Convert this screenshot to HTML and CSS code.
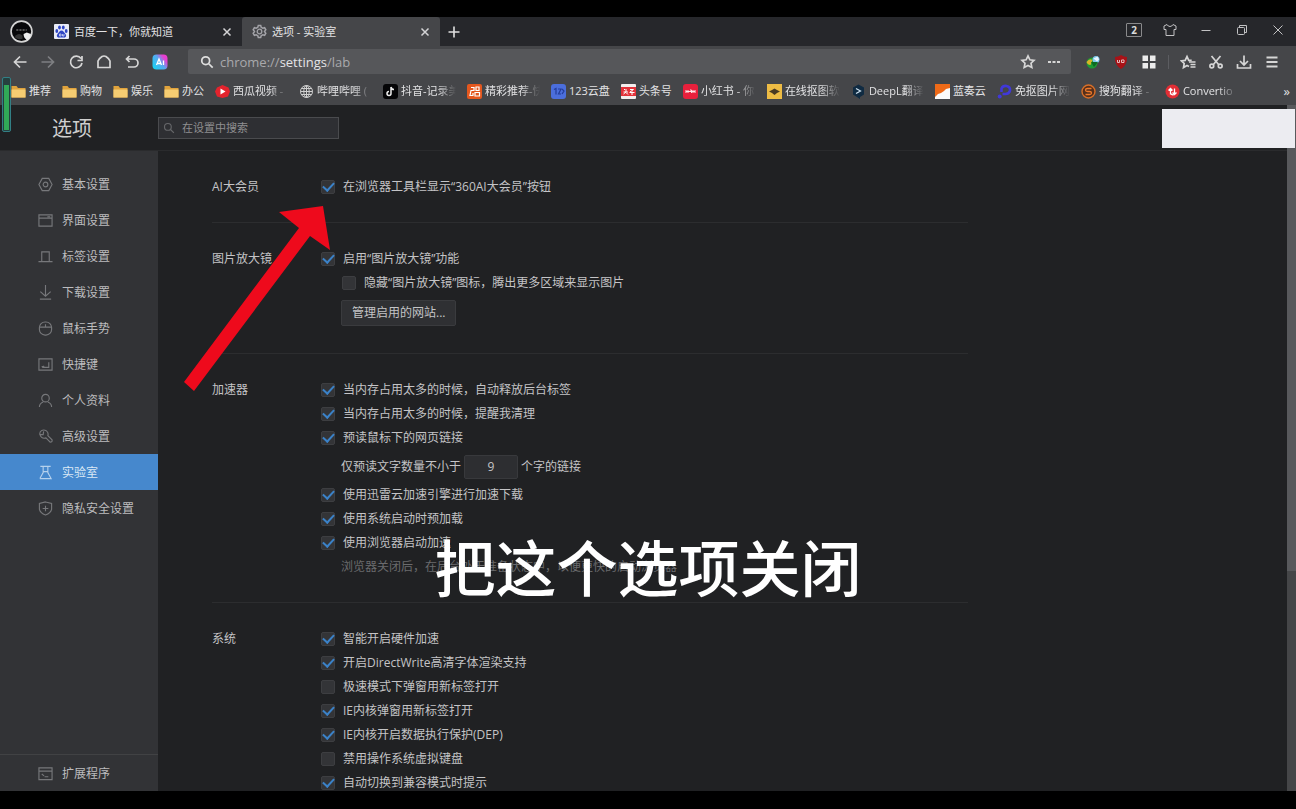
FILE: index.html
```html
<!DOCTYPE html>
<html lang="zh-CN">
<head>
<meta charset="utf-8">
<title>选项 - 实验室</title>
<link rel="stylesheet" href="styles.css">
</head>
<body>
<svg class="defs" aria-hidden="true">
  <symbol id="folder" viewBox="0 0 15 15"><path d="M.5 2h5l1.500 2h7.500v9.500h-14z" fill="#e0a33c"/><path d="M.5 5.500h14v8h-14z" fill="#f6cd72"/></symbol>
  <symbol id="close" viewBox="0 0 12 12"><path d="M2.500 2.500l7 7M9.500 2.500l-7 7" stroke="currentColor" stroke-width="1.500" fill="none"/></symbol>
</svg>
<div class="browser">
  <div class="tabstrip">
    <button class="avatar" aria-label="账号"><svg viewBox="0 0 22 22"><circle cx="11" cy="11" r="10" fill="#08080a" stroke="#d4d4d4" stroke-width="1.600"/><path d="M6 9.500h10" stroke="#6a6a6a" stroke-width="1.500" stroke-dasharray="2 1"/><path d="M5 15q4-3 7 0v3q-4 1-7-1z" fill="#333"/><path d="M13 13.500l3-1.500 4 1.500q0 4.500-3.500 6-3.500-2-3.500-6z" fill="#eee"/></svg></button>
    <div class="tab">
      <svg class="fav" viewBox="0 0 15 15"><rect width="15" height="15" rx="1" fill="#e9ecf8"/><g fill="#2f46c4"><ellipse cx="2.800" cy="7" rx="1.400" ry="1.900"/><ellipse cx="5.500" cy="3.500" rx="1.400" ry="1.900"/><ellipse cx="9.300" cy="3.500" rx="1.400" ry="1.900"/><ellipse cx="12.200" cy="7" rx="1.400" ry="1.900"/><path d="M7.500 6.500c2 0 2.500 2 4 3.500 1.500 2 0 4-2 3.600-1.500-.3-2.500-.3-4 0-2 .4-3.500-1.600-2-3.600 1.500-1.500 2-3.500 4-3.500z"/></g><path d="M5.500 10v2h1.500v-2zM8.500 10v2H10v-2" stroke="#e9ecf8" stroke-width=".7" fill="none"/></svg>
      <span class="tab-title">百度一下，你就知道</span>
      <button class="tab-close" aria-label="关闭标签"><svg><use href="#close"/></svg></button>
    </div>
    <div class="tab tab-on">
      <svg class="fav" viewBox="0 0 15 15" fill="none" stroke="#a3a3a8"><path d="M6.300 1.500h2.400l.5 1.800 1.600.9 1.800-.5 1.200 2.100L12.500 7.500l1.300 1.700-1.200 2.100-1.800-.5-1.600.9-.5 1.800H6.300l-.5-1.800-1.600-.9-1.800.5-1.200-2.100 1.300-1.700-1.300-1.700 1.200-2.100 1.800.5 1.600-.9z" stroke-width="1.500"/><circle cx="7.500" cy="7.500" r="2.300" stroke-width="1.300"/></svg>
      <span class="tab-title">选项 - 实验室</span>
      <button class="tab-close" aria-label="关闭标签"><svg><use href="#close"/></svg></button>
    </div>
    <button class="newtab" aria-label="新建标签"><svg viewBox="0 0 12 12"><path d="M6 .5v11M.5 6h11" stroke="#e0e0e0" stroke-width="1.600"/></svg></button>
    <div class="winctl">
      <button class="wbtn" aria-label="窗口数 2"><span class="count">2</span></button>
      <button class="wbtn" aria-label="皮肤"><svg viewBox="0 0 14 14"><path d="M4 1.500L1 3v3.500h2v6h8v-6h2V3l-3-1.500q-1 2-3 2t-3-2z"/></svg></button>
      <button class="wbtn" aria-label="最小化"><svg viewBox="0 0 14 14"><path d="M2.500 7.500h9"/></svg></button>
      <button class="wbtn" aria-label="还原"><svg viewBox="0 0 14 14"><rect x="2.500" y="4.500" width="7" height="7" rx="1"/><path d="M4.500 4.500v-2h7v7h-2"/></svg></button>
      <button class="wbtn" aria-label="关闭"><svg viewBox="0 0 14 14"><path d="M2.500 2.500l9 9M11.500 2.500l-9 9"/></svg></button>
    </div>
  </div>

  <div class="toolbar">
    <div class="nav">
      <button class="tool" aria-label="后退"><svg viewBox="0 0 16 16"><path d="M14.500 8H2.500M8 2.500L2.500 8 8 13.500"/></svg></button>
      <button class="tool dim" aria-label="前进"><svg viewBox="0 0 16 16"><path d="M1.500 8h12M8 2.500L13.500 8 8 13.500"/></svg></button>
      <button class="tool" aria-label="刷新"><svg viewBox="0 0 16 16"><path d="M13 4.500A5.800 5.800 0 1 0 14 9M14 2v4.500H9.500"/></svg></button>
      <button class="tool" aria-label="主页"><svg viewBox="0 0 16 16"><path d="M2 13.500V7q1-2.500 4-4.500 2-1 4 0 3 2 4 4.500v6.500z"/></svg></button>
      <button class="tool" aria-label="恢复"><svg viewBox="0 0 16 16"><path d="M5.500 2L2.500 5l3 3M2.500 5H10a4 4 0 0 1 0 8H4"/></svg></button>
      <button class="tool" aria-label="AI"><svg viewBox="0 0 16 16"><defs><linearGradient id="ai" x1="0" y1=".8" x2="1" y2=".1"><stop offset="0" stop-color="#19d3f3"/><stop offset=".5" stop-color="#58a8f0"/><stop offset=".8" stop-color="#e83fd0"/></linearGradient></defs><rect x=".5" y=".5" width="15" height="15" rx="4" fill="url(#ai)" stroke="none"/><path d="M4.500 11L7 5l2.500 6M5.500 9.500h3M11.500 6.500V11" stroke="#fff" stroke-width="1.300"/></svg></button>
    </div>
    <div class="omnibox">
      <svg class="lens" viewBox="0 0 16 16"><circle cx="6.500" cy="6.500" r="4.500"/><path d="M10 10l4.500 4.500"/></svg>
      <div class="url" role="textbox" aria-label="地址栏" contenteditable="plaintext-only">chrome://<b>settings</b>/lab</div>
      <button class="tool" aria-label="收藏"><svg viewBox="0 0 16 16"><path d="M8 2l1.900 3.800 4.100.5-3 2.900.8 4.200L8 11.400l-3.800 2 .8-4.200-3-2.900 4.100-.5z"/></svg></button>
      <button class="tool" aria-label="更多"><svg viewBox="0 0 16 16"><path d="M2 7h3v2H2zM6.500 7h3v2h-3zM11 7h3v2h-3z" fill="#d6d6d6" stroke="none"/></svg></button>
    </div>
    <div class="nav ext">
      <button class="tool" aria-label="IDM"><svg viewBox="0 0 16 16" stroke="none"><circle cx="7" cy="9" r="5.500" fill="#1d9a35"/><path d="M1.500 8q3-4 6-2l-2 5q-3 0-4-3z" fill="#d8b426"/><circle cx="11" cy="5.500" r="3.500" fill="#7ec9ec"/><path d="M8.500 4.500l4-2 1.500 3-2 2z" fill="#e9f5ff"/><path d="M6 8l3 5 4-5z" fill="#0c6b22"/></svg></button>
      <button class="tool" aria-label="uBlock"><svg viewBox="0 0 16 16" stroke="none"><path d="M8 1q3 2 6 2 .5 8-6 12Q1.500 11 2 3q3 0 6-2z" fill="#a81217"/><path d="M4.500 6v2.500h2V6M8.500 6H11v2.500H8.500z" fill="none" stroke="#e6b9b9" stroke-width="1"/></svg></button>
      <button class="tool" aria-label="扩展"><svg viewBox="0 0 16 16" stroke="none" fill="#ececec"><path d="M1.500 1.500h5.500v5.500H1.500zM9 1.500h5.500v5.500H9zM1.500 9h5.500v5.500H1.500zM9 9h5.500v5.500H9z"/></svg></button>
    </div>
    <span class="sep"></span>
    <div class="nav">
      <button class="tool" aria-label="收藏夹"><svg viewBox="0 0 16 16"><path d="M9 12.500l-2-1-3.500 2 .7-4-2.700-2.600 3.700-.5L7 2.500l1.700 3.900h3"/><path d="M9 8h6.500M10.500 10.500h5M10.500 13h5"/></svg></button>
      <button class="tool" aria-label="截图"><svg viewBox="0 0 16 16"><path d="M3.500 2l7.500 9M12.500 2L5 11"/><circle cx="3.800" cy="12" r="1.900"/><circle cx="12.200" cy="12" r="1.900"/></svg></button>
      <button class="tool" aria-label="下载"><svg viewBox="0 0 16 16"><path d="M8 1.500v9M4 7l4 4 4-4M1.500 10v4h13v-4"/></svg></button>
      <button class="tool" aria-label="菜单"><svg viewBox="0 0 16 16"><path d="M2.500 3.500h11M2.500 8h11M2.500 12.500h11" stroke-width="2"/></svg></button>
    </div>
  </div>

  <nav class="bookmarks">
    <a href="#"><svg><use href="#folder"/></svg><span>推荐</span></a>
    <a href="#"><svg><use href="#folder"/></svg><span>购物</span></a>
    <a href="#"><svg><use href="#folder"/></svg><span>娱乐</span></a>
    <a href="#"><svg><use href="#folder"/></svg><span>办公</span></a>
    <a href="#" class="long"><svg viewBox="0 0 15 15"><path d="M7.500 1l6 2.500L15 7.500l-2 5-5.500 1.500L2 12.500 0 7.500l2-4z" fill="#e3232d"/><path d="M5.500 4.500v6l5-3z" fill="#fff"/></svg><span>西瓜视频 -</span></a>
    <a href="#" class="long"><svg viewBox="0 0 15 15" fill="none" stroke="#cfcfcf"><circle cx="7.500" cy="7.500" r="6"/><ellipse cx="7.500" cy="7.500" rx="2.700" ry="6"/><path d="M1.500 7.500h12M2.500 4.500h10M2.500 10.500h10M7.500 1.500v12"/></svg><span>哔哩哔哩 (</span></a>
    <a href="#" class="long"><svg viewBox="0 0 15 15"><rect width="15" height="15" rx="3" fill="#050507"/><path d="M8 3v6.500a2 2 0 1 1-2-2M8 3q.5 2.500 3 2.500" fill="none" stroke="#eee" stroke-width="1.500"/></svg><span>抖音-记录美</span></a>
    <a href="#" class="long"><svg viewBox="0 0 15 15"><rect width="15" height="15" rx="2" fill="#e4571e"/><path d="M4 3.500h3v3H4l-1 5h3V9M9 3h3v3.500H9zM8 8.500h4.500v3.500H8z" fill="none" stroke="#fff" stroke-width="1.200"/></svg><span>精彩推荐-快</span></a>
    <a href="#"><svg viewBox="0 0 15 15"><rect width="15" height="15" rx="3" fill="#4b6edc"/><path d="M3 5.500l2-1v6M7 5h3l-2.500 5H10M11 5l2 2-2 3" stroke="#233c9b" stroke-width="1.200" fill="none"/></svg><span>123云盘</span></a>
    <a href="#"><svg viewBox="0 0 15 15"><rect width="15" height="15" rx="1" fill="#f3eeee"/><path d="M0 3h15v9H0z" fill="#e3323a"/><path d="M3 5l1 1M2.500 8h4.500M5 5v3l-2.500 2M5.500 9l1.500 1.500M9 5.500h3.500L9 8M8.500 8.500h5M11 7.500v3.500" stroke="#fff" fill="none"/></svg><span>头条号</span></a>
    <a href="#" class="long"><svg viewBox="0 0 15 15"><rect width="15" height="15" rx="3" fill="#e8203c"/><path d="M3 6v3M5 6v3M7 6h1.500v3M10 6v3M12 6v3M3 7.500h9" stroke="#ffe3e6" fill="none"/></svg><span>小红书 - 你</span></a>
    <a href="#" class="long"><svg viewBox="0 0 15 15"><rect width="15" height="15" fill="#eebc44"/><path d="M2 7.500L5 6l2.500-1.500L10 6l3 1.500-3 1.500-2.500 2L5 9z" fill="#4a3a22"/></svg><span>在线抠图软</span></a>
    <a href="#" class="long"><svg viewBox="0 0 15 15"><path d="M7.500.5l5.500 3v7L9 13v2l-3-2-4-2.500v-7z" fill="#102b42"/><path d="M5 4.500l4.500 2.500L5 9.500" fill="none" stroke="#cfe3f2" stroke-width="1.200"/></svg><span>DeepL翻译</span></a>
    <a href="#"><svg viewBox="0 0 15 15"><path d="M0 0h15v15H0z" fill="#fafafa"/><path d="M0 0h15v4L11 5 9 7 6 9 3 10 0 13z" fill="#ef6a18"/></svg><span>蓝奏云</span></a>
    <a href="#" class="long"><svg viewBox="0 0 15 15"><path d="M4.500 8V4.500Q6 1.500 9.500 2q4 .8 3.500 4.500-.8 3.500-4.500 3.500H5.500" fill="none" stroke="#4038d8" stroke-width="2.600"/><circle cx="2.700" cy="12.500" r="2" fill="#4038d8"/></svg><span>免抠图片网</span></a>
    <a href="#" class="long"><svg viewBox="0 0 15 15"><circle cx="7.500" cy="7.500" r="6.500" fill="#542f1b" stroke="#d86f28" stroke-width="1.400"/><path d="M10.500 4.500h-4q-2 0-2 1.500t2 1.500h2q2 0 2 1.500t-2 1.500h-4" fill="none" stroke="#ef7a2c" stroke-width="1.300"/></svg><span>搜狗翻译 -</span></a>
    <a href="#" class="long"><svg viewBox="0 0 15 15"><circle cx="7.500" cy="7.500" r="7" fill="#e12e35"/><path d="M5.500 10.500V5M3.500 6.500l2-2 2 2M5.500 9q.5 2 3 2M9.500 4.500V10M7.500 8.500l2 2 2-2" fill="none" stroke="#fff" stroke-width="1.300"/></svg><span>Convertio</span></a>
    <button class="more" aria-label="更多书签">»</button>
  </nav>

  <div class="page">
    <div class="settings">
      <header class="head">
        <h1>选项</h1>
        <label class="search"><svg viewBox="0 0 16 16"><circle cx="6.500" cy="6.500" r="4.500"/><path d="M10 10l4.500 4.500"/></svg><input type="text" placeholder="在设置中搜索" aria-label="在设置中搜索"></label>
      </header>
      <div class="body">
        <aside class="side">
          <a href="#"><svg viewBox="0 0 16 16"><path d="M4.500 1.500h7L15 8l-3.500 6.500h-7L1 8z"/><circle cx="8" cy="8" r="2.500"/></svg>基本设置</a>
          <a href="#"><svg viewBox="0 0 16 16"><path d="M1 2h14v12H1zM1 5.500h14M10 4h3"/></svg>界面设置</a>
          <a href="#"><svg viewBox="0 0 16 16"><path d="M.5 13.500h3.500V3h8v10.500h3.500M4 13.500h8"/></svg>标签设置</a>
          <a href="#"><svg viewBox="0 0 16 16"><path d="M8 0v12M2.500 7L8 12l5.500-5M2 15h12"/></svg>下载设置</a>
          <a href="#"><svg viewBox="0 0 16 16"><rect x="1.500" y="1" width="13" height="14" rx="6"/><path d="M1.500 6.500h13M8 3.500v3"/></svg>鼠标手势</a>
          <a href="#"><svg viewBox="0 0 16 16"><path d="M1 2h14v12H1zM11.500 5.500V11h-7M4.500 9.500V11M6.500 9.500L5 11"/></svg>快捷键</a>
          <a href="#"><svg viewBox="0 0 16 16"><circle cx="8" cy="5.500" r="4"/><path d="M1.500 15q0-4 4-5.500M14.500 15q0-4-4-5.500"/></svg>个人资料</a>
          <a href="#"><svg viewBox="0 0 16 16"><path d="M6 2.500L5.500 6 2 6M2 6Q1.500 2.500 4 1.500t5 .5q2.500 2 1.500 5l4.500 4.500q.5 2.500-2 2.500L8.500 9.500Q4 11 2 6z"/></svg>高级设置</a>
          <a href="#" class="on" aria-current="page"><svg viewBox="0 0 16 16"><path d="M2.500 1.500h11M2 14.500h12L10.500 8V1.500M5.500 1.500V8L2 14.500M6 7h4"/></svg>实验室</a>
          <a href="#"><svg viewBox="0 0 16 16"><path d="M8 1l6.500 1.500V9q-1 4-6.500 6Q2.500 13 1.500 9V2.500zM8 5v6M5 8h6"/></svg>隐私安全设置</a>
          <div class="side-foot"><a href="#"><svg viewBox="0 0 16 16"><path d="M1 2h14v12.500H1zM1 5.500h14M4 8.500l2.500 2M7 11.500h4"/></svg>扩展程序</a></div>
        </aside>
        <main class="main">
          <section class="group">
            <h2>AI大会员</h2>
            <div class="opts">
              <label class="opt"><input type="checkbox" checked>在浏览器工具栏显示“360AI大会员”按钮</label>
            </div>
          </section>
          <section class="group">
            <h2>图片放大镜</h2>
            <div class="opts">
              <label class="opt"><input type="checkbox" checked>启用“图片放大镜”功能</label>
              <label class="opt sub"><input type="checkbox">隐藏“图片放大镜”图标，腾出更多区域来显示图片</label>
              <button class="manage">管理启用的网站...</button>
            </div>
          </section>
          <section class="group">
            <h2>加速器</h2>
            <div class="opts">
              <label class="opt"><input type="checkbox" checked>当内存占用太多的时候，自动释放后台标签</label>
              <label class="opt"><input type="checkbox" checked>当内存占用太多的时候，提醒我清理</label>
              <label class="opt"><input type="checkbox" checked>预读鼠标下的网页链接</label>
              <label class="count-row">仅预读文字数量不小于<input type="text" value="9">个字的链接</label>
              <label class="opt"><input type="checkbox" checked>使用迅雷云加速引擎进行加速下载</label>
              <label class="opt"><input type="checkbox" checked>使用系统启动时预加载</label>
              <label class="opt"><input type="checkbox" checked>使用浏览器启动加速</label>
              <p class="note">浏览器关闭后，在后台处于准备状态中，以便更快的启动浏览器</p>
            </div>
          </section>
          <section class="group">
            <h2>系统</h2>
            <div class="opts">
              <label class="opt"><input type="checkbox" checked>智能开启硬件加速</label>
              <label class="opt"><input type="checkbox" checked>开启DirectWrite高清字体渲染支持</label>
              <label class="opt"><input type="checkbox">极速模式下弹窗用新标签打开</label>
              <label class="opt"><input type="checkbox" checked>IE内核弹窗用新标签打开</label>
              <label class="opt"><input type="checkbox" checked>IE内核开启数据执行保护(DEP)</label>
              <label class="opt"><input type="checkbox">禁用操作系统虚拟键盘</label>
              <label class="opt"><input type="checkbox" checked>自动切换到兼容模式时提示</label>
            </div>
          </section>
        </main>
      </div>
    </div>
    <div class="scroll"><div class="thumb"></div></div>
    <div class="patch"></div>
  </div>
</div>
<div class="meter"><div class="meter-fill"></div></div>
<svg class="arrow" viewBox="0 0 146 186" aria-hidden="true"><path d="M139 1L95 7l20 16L0 177l10 9L126 31l20 14z" fill="#ee0a1c"/></svg>
<p class="caption">把这个选项关闭</p>
</body>
</html>
```

FILE: styles.css
```css
* { box-sizing: border-box; }
body {
  margin: 0;
  height: 100vh;
  padding: 17px 0 18px;
  overflow: hidden;
  position: relative;
  background: #000;
  color: #c4c4c6;
  font: 12px/24px "Open Sans", "Noto Sans CJK SC", sans-serif;
}
h1, h2, p { margin: 0; font-weight: 400; }
a { color: inherit; text-decoration: none; }
button, input { font: inherit; color: inherit; margin: 0; padding: 0; border: 0; background: none; }
svg { display: block; flex: none; }
.defs { position: absolute; width: 0; height: 0; }
.browser { height: 100%; display: flex; flex-direction: column; background: #202123; }

/* tab strip */
.tabstrip { display: flex; align-items: stretch; height: 29px; flex: none; background: #26272b; padding-left: 10px; }
.avatar { width: 24px; margin-right: 10px; display: flex; align-items: center; }
.avatar svg { width: 23px; height: 23px; }
.tab { width: 198px; display: flex; align-items: center; gap: 5px; padding: 0 9px 0 10px; font-size: 11px; color: #e2e2e4; }
.tab-on { background: #454649; border-radius: 3px 3px 0 0; }
.fav { width: 15px; height: 15px; }
.tab-title { flex: 1; white-space: nowrap; }
.tab-close { color: #d4d4d6; }
.tab-close svg { width: 12px; height: 12px; }
.newtab { width: 28px; display: flex; align-items: center; justify-content: center; }
.newtab svg { width: 12px; height: 12px; }
.winctl { display: flex; margin-left: auto; }
.wbtn { width: 36px; display: flex; align-items: center; justify-content: center; padding-bottom: 3px; }
.wbtn svg { width: 14px; height: 14px; fill: none; stroke: #c2c2c4; }
.count { width: 16px; height: 14px; border: 1px solid #8a8a8c; border-radius: 1px; font: 700 10px/12px "Open Sans", sans-serif; color: #dcdcdc; }

/* toolbar */
.toolbar { display: flex; align-items: center; height: 31px; flex: none; background: #454649; padding: 0 14px 0 10px; }
.nav { display: flex; gap: 8px; }
.tool { width: 20px; height: 20px; display: flex; align-items: center; justify-content: center; }
.tool svg { width: 16px; height: 16px; fill: none; stroke: #d6d6d6; stroke-width: 1.7; }
.tool.dim svg { stroke: #7e7f82; }
.tool svg[stroke="none"] { stroke: none; }
.tool svg[fill] { fill: #ececec; }
.omnibox { flex: 1; height: 25px; margin: 0 12px 0 18px; padding: 0 7px 0 12px; display: flex; align-items: center; gap: 6px; background: #56575a; border-radius: 2px; }
.lens { width: 14px; height: 14px; fill: none; stroke: #dedede; stroke-width: 2; }
.url { flex: 1; font-size: 13px; color: #a9a9ac; }
.url b { font-weight: 400; color: #e4e4e6; }
.sep { width: 1px; height: 14px; background: #5c5d61; margin: 0 9px; }

/* bookmarks */
.bookmarks { display: flex; align-items: center; gap: 11px; height: 28px; flex: none; background: #454649; padding: 0 6px 0 11px; font-size: 11px; color: #e2e2e4; }
.bookmarks a { display: flex; align-items: center; gap: 3px; white-space: nowrap; }
.bookmarks svg { width: 15px; height: 15px; }
.long span { width: 55px; -webkit-mask-image: linear-gradient(90deg, #000 65%, transparent); mask-image: linear-gradient(90deg, #000 65%, transparent); }
.more { margin-left: auto; font-size: 13px; line-height: 20px; }

/* settings page */
.page { flex: 1; min-height: 0; display: flex; position: relative; }
.settings { flex: 1; display: flex; flex-direction: column; min-height: 0; }
.head { height: 46px; flex: none; display: flex; align-items: center; border-bottom: 1px solid #2a2b2d; }
.head h1 { width: 158px; padding: 2px 0 0 52px; font-size: 20px; color: #cfcfcf; }
.search { width: 181px; height: 22px; display: flex; align-items: center; gap: 7px; padding: 0 4px; border: 1px solid #4a4b4e; background: #2e2f33; }
.search svg { width: 12px; height: 12px; fill: none; stroke: #66676a; stroke-width: 1.5; }
.search input { flex: 1; min-width: 0; font-size: 11px; line-height: 18px; outline: 0; }
.search input::placeholder { color: #8e8e90; opacity: 1; }
.body { flex: 1; display: flex; min-height: 0; }
.side { width: 158px; flex: none; display: flex; flex-direction: column; background: #323336; padding-top: 15px; }
.side a { display: flex; align-items: center; gap: 9px; height: 36px; padding: 1px 0 0 38px; color: #bcbcbe; }
.side svg { width: 15px; height: 15px; fill: none; stroke: #77787b; stroke-width: 1.2; }
.side .on { background: #4688cd; color: #dbe8f5; }
.side .on svg { stroke: #b5d1ed; }
.side-foot { margin-top: auto; border-top: 1px solid #414244; }
.main { flex: 1; overflow: hidden; padding-left: 54px; }
.group { display: grid; grid-template-columns: 109px 1fr; max-width: 756px; padding: 24px 0 23px; border-bottom: 1px solid #2c2d2f; }
.group h2 { font-size: 12px; color: #c4c4c6; }
.opts { display: flex; flex-direction: column; align-items: flex-start; }
.opt { display: flex; align-items: center; gap: 8px; height: 24px; white-space: nowrap; }
.opt input { appearance: none; width: 14px; height: 14px; border: 1px solid #3d3e41; border-radius: 2px; background: #333437; display: flex; align-items: center; justify-content: center; }
.opt input:checked::after { content: ""; width: 9px; height: 5px; margin-bottom: 3px; border: solid #3b82c8; border-width: 0 0 2px 2px; transform: rotate(-47deg); }
.sub { margin-left: 21px; }
.manage { height: 26px; margin: 5px 0 4px 20px; padding: 0 10px; background: #2f3033; border: 1px solid #3a3b3e; border-radius: 2px; line-height: 24px; }
.count-row { display: flex; align-items: center; gap: 3px; height: 33px; margin-left: 20px; }
.count-row input { width: 54px; height: 24px; text-align: center; background: #2d2e31; border: 1px solid #38393c; border-radius: 2px; }
.note { margin-left: 20px; color: #6a6b6d; white-space: nowrap; }

.scroll { width: 9px; flex: none; background: #454648; }
.thumb { height: 68%; background: #58595c; }
.patch { position: absolute; right: 1px; top: 4px; width: 133px; height: 39px; background: #ececf1; }

/* overlays */
.meter { position: absolute; left: 2px; top: 77px; width: 9px; height: 55px; padding: 7px 1px 1px; border: 1px solid #327f85; border-radius: 2px; background: #26403f; }
.meter-fill { height: 100%; background: #31a957; }
.arrow { position: absolute; left: 184px; top: 205px; width: 146px; height: 186px; }
.caption { position: absolute; left: 0; right: 0; top: 526px; text-align: center; font: 500 61px/80px "Noto Sans CJK SC", sans-serif; color: #fff; }
```
